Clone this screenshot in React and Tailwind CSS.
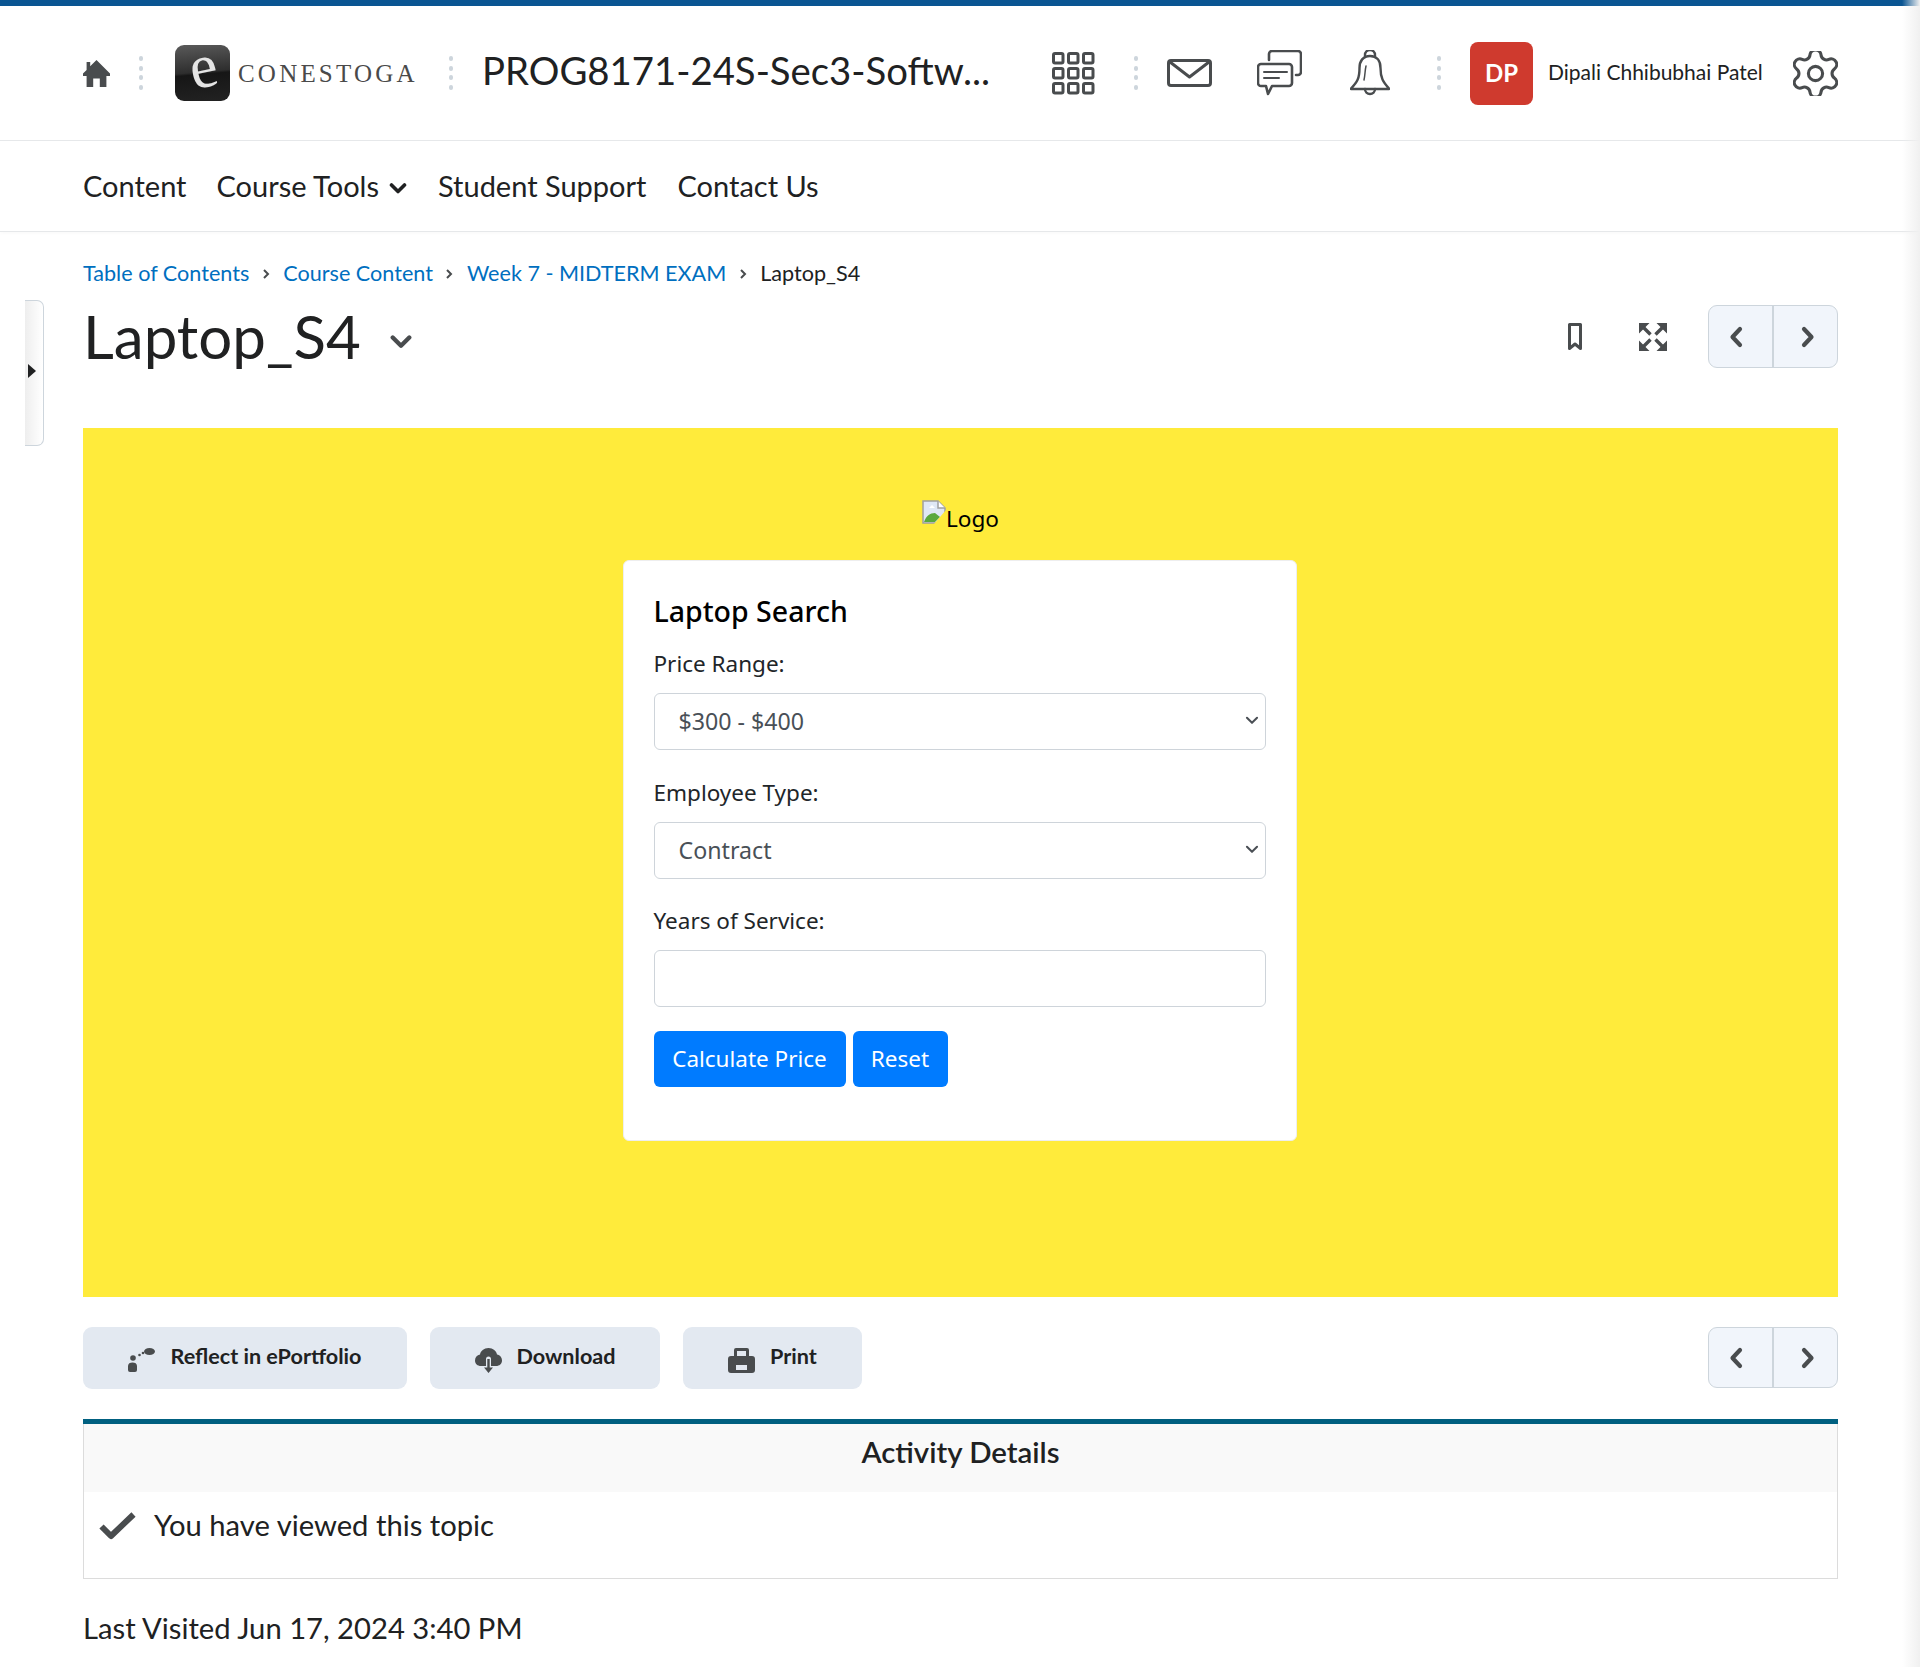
import React from "react";

const Sep = ({ className = "" }) => (
  <div className={`flex flex-col justify-between w-[4px] h-[34px] shrink-0 ${className}`}>
    {[0, 1, 2, 3].map((i) => (
      <span key={i} className="block w-[4px] h-[5px] rounded-full bg-[#cdd5dc]" />
    ))}
  </div>
);

const Chevron = ({ dir = "left" }) => (
  <svg width="14" height="22" viewBox="0 0 14 22" fill="none" stroke="#494c4e" strokeWidth="4.2" strokeLinecap="round" strokeLinejoin="round">
    {dir === "left" ? <path d="M11 3 3.5 11 11 19" /> : <path d="M3 3l7.5 8L3 19" />}
  </svg>
);

const Pager = ({ h }) => (
  <div className={`flex w-[130px] ${h} rounded-[9px] border border-[#cdd5dc] bg-[#f1f5fb] overflow-hidden shrink-0`}>
    <div className="w-[65px] flex items-center justify-center pr-[9px] border-r-2 border-[#cdd5dc]">
      <Chevron dir="left" />
    </div>
    <div className="flex-1 flex items-center justify-center pl-[4px]">
      <Chevron dir="right" />
    </div>
  </div>
);

const Home = () => (
  <svg className="shrink-0" width="27" height="27" viewBox="0 0 27 27" fill="#494c4e">
    <path d="M13.5 0 27 13.5v2.5h-3.6v11h-6.6v-8.5h-6.6V27H3.6V16H0v-2.5l3.6-3.6V2h3.6v4.3z" />
  </svg>
);

const GridIcon = () => (
  <svg className="shrink-0" width="43" height="43" viewBox="0 0 43 43" fill="none" stroke="#494c4e" strokeWidth="3">
    {[1.5, 16.5, 31.5].flatMap((y) =>
      [1.5, 16.5, 31.5].map((x) => <rect key={`${x}-${y}`} x={x} y={y} width="9.5" height="9.5" rx="1.5" />)
    )}
  </svg>
);

const Mail = () => (
  <svg className="shrink-0" width="45" height="28" viewBox="0 0 45 28" fill="none" stroke="#494c4e" strokeWidth="3" strokeLinejoin="round">
    <rect x="1.5" y="1.5" width="42" height="25" rx="2.5" />
    <path d="M3 3l19.5 15L42 3" />
  </svg>
);

const Chat = () => (
  <svg className="shrink-0" width="45" height="46" viewBox="0 0 45 46" fill="none" stroke="#494c4e" strokeWidth="2.6" strokeLinejoin="round" strokeLinecap="round">
    <path d="M12 10V4a3 3 0 0 1 3-3h26a3 3 0 0 1 3 3v18a3 3 0 0 1-3 3h-2" />
    <path d="M4 14h28a3 3 0 0 1 3 3v16a3 3 0 0 1-3 3H15l-4 8-2-8H4a3 3 0 0 1-3-3V17a3 3 0 0 1 3-3z" />
    <path d="M7 22h23M7 28h15" strokeWidth="2" />
  </svg>
);

const Bell = () => (
  <svg className="shrink-0" width="40" height="46" viewBox="0 0 40 46" fill="none" stroke="#494c4e" strokeWidth="2.4" strokeLinejoin="round" strokeLinecap="round">
    <path d="M15 7V5a5 5 0 0 1 10 0v2" />
    <path d="M20 6c-7 0-10.500 5-10.500 12 0 10-2 14-8.500 20.500V39h38v-.5C33 32 30.500 28 30.500 18 30.500 11 27 6 20 6z" />
    <path d="M15 39a5 5 0 0 0 10 0" />
    <path d="M16 16c-1 4-1 10-2 14" strokeWidth="1.500" />
  </svg>
);

const Gear = () => (
  <svg className="shrink-0" width="45" height="45" viewBox="2.8 2.5 18.4 19" fill="none" stroke="#494c4e" strokeWidth="1.3" strokeLinecap="round" strokeLinejoin="round">
    <path d="M9.671 4.136a2.34 2.34 0 0 1 4.659 0 2.34 2.34 0 0 0 3.319 1.915 2.34 2.34 0 0 1 2.33 4.033 2.34 2.34 0 0 0 0 3.831 2.34 2.34 0 0 1-2.33 4.033 2.34 2.34 0 0 0-3.319 1.915 2.34 2.34 0 0 1-4.659 0 2.34 2.34 0 0 0-3.32-1.915 2.34 2.34 0 0 1-2.33-4.033 2.34 2.34 0 0 0 0-3.831A2.34 2.34 0 0 1 6.35 6.051a2.34 2.34 0 0 0 3.319-1.915" />
    <circle cx="12" cy="12" r="3" />
  </svg>
);

const SmallChevronDown = ({ w = 18, h = 11, sw = 3.4, color = "#494c4e" }) => (
  <svg width={w} height={h} viewBox="0 0 18 11" fill="none" stroke={color} strokeWidth={sw} strokeLinecap="round" strokeLinejoin="round">
    <path d="M2.500 2 9 8.500 15.500 2" />
  </svg>
);

const Crumb = ({ children }) => <span className="text-[#006fbf]">{children}</span>;
const CrumbSep = () => (
  <svg className="mx-[13.5px] mt-[2px] shrink-0" width="7" height="10" viewBox="0 0 7 10" fill="none" stroke="#494c4e" strokeWidth="2">
    <path d="M1 1l4 4-4 4" />
  </svg>
);

const SelectField = ({ label, value, options, className }) => (
  <div className={className}>
    <label className="block text-[22.5px] leading-[36px] text-[#212529] mb-[11px]">{label}</label>
    <div className="relative">
      <select
        defaultValue={value}
        className="block w-full h-[57px] appearance-none rounded-[6px] border border-[#ced4da] bg-white pl-[24px] text-[23.2px] text-[#495057] outline-none"
      >
        {options.map((o) => (
          <option key={o}>{o}</option>
        ))}
      </select>
      <span className="absolute right-[7px] top-[23px] flex">
        <SmallChevronDown w={14} h={9} sw={2.6} color="#4a4f55" />
      </span>
    </div>
  </div>
);

const ActionButton = ({ icon, label, className }) => (
  <button className={`flex items-start justify-center gap-[15px] h-[62px] rounded-[9px] bg-[#e3e9f1] text-[21.6px] font-bold text-[#202122] ${className}`}>
    <span className="mt-[21px] flex">{icon}</span>
    <span className="block mt-[15px] leading-[28px]">{label}</span>
  </button>
);

export default function App() {
  return (
    <div className="relative min-h-[1667px] bg-white font-['Lato',sans-serif] text-[#202122] overflow-hidden">
      <div className="h-[6px] bg-[#0a5592]" />

      <header className="flex items-center h-[135px] border-b border-[#e6e8ea] pl-[83px]">
        <Home />
        <Sep className="ml-[29px]" />
        <div className="ml-[32px] w-[55px] h-[56px] rounded-[9px] bg-[linear-gradient(175deg,#5a5a5a_0%,#2e2e2e_48%,#161616_52%,#222222_100%)] flex items-center justify-center shrink-0">
          <span className="font-['Liberation_Serif',serif] text-[62px] leading-[50px] text-[#e4e4e4] -mt-[14px] -rotate-12">e</span>
        </div>
        <span className="ml-[8px] mt-[2px] w-[177px] shrink-0 font-['Liberation_Serif',serif] text-[25px] tracking-[3.2px] text-[#4a4a4a] whitespace-nowrap">CONESTOGA</span>
        <Sep className="ml-[34px]" />
        <div className="ml-[29px] w-[508px] shrink-0 text-[38.3px] whitespace-nowrap -mt-[4px]">PROG8171-24S-Sec3-Softw...</div>
        <div className="ml-[62px]"><GridIcon /></div>
        <Sep className="ml-[39px]" />
        <div className="ml-[29px]"><Mail /></div>
        <div className="ml-[45px]"><Chat /></div>
        <div className="ml-[48px]"><Bell /></div>
        <Sep className="ml-[47px]" />
        <div className="ml-[29px] w-[63px] h-[63px] rounded-[8px] bg-[#cf3a2e] flex items-center justify-center text-white text-[24px] font-bold shrink-0">DP</div>
        <div className="ml-[15px] w-[214px] shrink-0 text-[21px] whitespace-nowrap -mt-[2px]">Dipali Chhibubhai Patel</div>
        <div className="ml-[31px]"><Gear /></div>
      </header>

      <nav className="flex items-center h-[91px] border-b border-[#e6e8ea] pl-[83px] text-[29px] shadow-[0_2px_3px_rgba(0,0,0,0.02)]">
        <span>Content</span>
        <span className="ml-[30px]">Course Tools</span>
        <span className="ml-[10px] mt-[4px] flex"><SmallChevronDown w={18} h={11} sw={3.6} color="#202122" /></span>
        <span className="ml-[31px]">Student Support</span>
        <span className="ml-[31px]">Contact Us</span>
      </nav>

      <div className="absolute left-[25px] top-[300px] w-[19px] h-[146px] rounded-r-[7px] border border-l-0 border-[#cdd5dc] bg-gradient-to-r from-[#eeeeee] to-white flex items-center">
        <svg className="ml-[3px] -mt-[4px]" width="8" height="14" viewBox="0 0 8 14" fill="#202122"><path d="M0 0l8 7-8 7z" /></svg>
      </div>

      <main className="pl-[83px] pr-[82px]">
        <div className="flex items-center h-[30px] mt-[26px] text-[21.6px] whitespace-nowrap">
          <Crumb>Table of Contents</Crumb>
          <CrumbSep />
          <Crumb>Course Content</Crumb>
          <CrumbSep />
          <Crumb>Week 7 - MIDTERM EXAM</Crumb>
          <CrumbSep />
          <span>Laptop_S4</span>
        </div>

        <div className="flex items-center h-[63px] mt-[17px]">
          <h1 className="text-[60px] leading-[63px] font-normal whitespace-nowrap">Laptop_S4</h1>
          <span className="ml-[28px] mt-[10px] flex"><SmallChevronDown w={24} h={14} sw={3.4} /></span>
          <div className="ml-auto flex items-center">
            <svg width="14" height="28" viewBox="0 0 14 28" fill="none" stroke="#494c4e" strokeWidth="3">
              <path d="M1.500 1.500h11v24L7 21l-5.500 4.500z" strokeLinejoin="round" />
            </svg>
            <svg className="ml-[57px]" width="28" height="28" viewBox="0 0 28 28" fill="#494c4e" stroke="#494c4e" strokeWidth="3.400">
              <path d="M0 0h10.500L0 10.500zM28 0v10.500L17.500 0zM0 28V17.500L10.500 28zM28 28H17.500L28 17.500z" stroke="none" />
              <path d="M4 4l7.500 7.500M24 4l-7.500 7.500M4 24l7.500-7.500M24 24l-7.500-7.500" fill="none" />
            </svg>
            <div className="ml-[41px]"><Pager h="h-[63px]" /></div>
          </div>
        </div>

        <section className="mt-[60px] h-[869px] bg-[#ffeb3b] flex flex-col items-center">
          <div className="flex items-start mt-[72px] h-[60px] text-[22.6px] leading-[34px] text-black font-['Noto_Sans',sans-serif]">
            <svg width="24" height="24" viewBox="0 0 24 24" className="shrink-0">
              <path d="M1 1h15l7 7v15H1z" fill="#dfe7f5" stroke="#a0a0a0" strokeWidth="1.500" />
              <path d="M16 1v7h7" fill="#fff" stroke="#a0a0a0" strokeWidth="1.500" />
              <path d="M2 22c2-6 6-9 11-9l5 4-5 5z" fill="#5aa83c" />
              <path d="M7 8l3-3 3 3z" fill="#fff" />
              <path d="M24 10v14H12z" fill="#ffeb3b" />
            </svg>
            <span className="mt-[2px]">Logo</span>
          </div>

          <div className="w-[674px] h-[581px] mr-[2px] rounded-[6px] bg-white border border-[#eeeeee] px-[30px] pt-[30px] font-['Noto_Sans',sans-serif] text-[#212529]">
            <h2 className="text-[28.5px] leading-[40px] font-medium text-black">Laptop Search</h2>
            <SelectField className="mt-[15px]" label="Price Range:" value="$300 - $400" options={["$300 - $400"]} />
            <SelectField className="mt-[25px]" label="Employee Type:" value="Contract" options={["Contract"]} />
            <div className="mt-[24px]">
              <label className="block text-[22.5px] leading-[36px] mb-[11px]">Years of Service:</label>
              <input type="text" className="block w-full h-[57px] rounded-[6px] border border-[#ced4da] bg-white outline-none" />
            </div>
            <div className="flex gap-[7px] mt-[24px]">
              <button className="w-[192px] h-[56px] rounded-[6px] bg-[#007bff] text-white text-[22.5px]">Calculate Price</button>
              <button className="w-[95px] h-[56px] rounded-[6px] bg-[#007bff] text-white text-[22.5px]">Reset</button>
            </div>
          </div>
        </section>

        <div className="flex items-start mt-[30px]">
          <ActionButton
            className="w-[324px]"
            label="Reflect in ePortfolio"
            icon={
              <svg width="27" height="24" viewBox="0 0 27 24" fill="#494c4e">
                <ellipse cx="21.500" cy="3.500" rx="5.500" ry="3.500" />
                <circle cx="5" cy="10" r="2.800" />
                <path d="M0 18c0-2.500 2-3.500 4.500-3.500S9 15.500 9 18v4a2 2 0 0 1-2 2H2a2 2 0 0 1-2-2z" />
                <circle cx="11.500" cy="7" r="1.300" />
                <circle cx="15" cy="5" r="1.300" />
              </svg>
            }
          />
          <ActionButton
            className="w-[230px] ml-[23px]"
            label="Download"
            icon={
              <svg width="27" height="25" viewBox="0 0 27 25" fill="#494c4e">
                <path d="M13.500 0C9 0 5.500 3 5 6.500 2 7 0 9.500 0 12.500 0 15.800 2.500 18 6 18h5V11a2.500 2.500 0 0 1 5 0v7h5c3.500 0 6-2.200 6-5.500 0-3-2-5.500-5-6C21.500 3 18 0 13.500 0z" />
                <path d="M12.300 11h2.400v8.500H18L13.500 25 9 19.500h3.300z" />
              </svg>
            }
          />
          <ActionButton
            className="w-[179px] ml-[23px]"
            label="Print"
            icon={
              <svg width="27" height="25" viewBox="0 0 27 25" fill="#494c4e">
                <path d="M6 9V2a2 2 0 0 1 2-2h11a2 2 0 0 1 2 2v7h-3V3H9v6z" />
                <path fillRule="evenodd" d="M3 8h21a3 3 0 0 1 3 3v11a3 3 0 0 1-3 3H3a3 3 0 0 1-3-3V11a3 3 0 0 1 3-3zm5 9v5h11v-5z" />
              </svg>
            }
          />
          <div className="ml-auto"><Pager h="h-[61px]" /></div>
        </div>

        <div className="mt-[30px] border-t-[5px] border-[#006080]">
          <div className="h-[68px] bg-[#f9f9f9] border-x border-[#dcdcdc] flex items-center justify-center text-[29.4px] font-semibold pb-[12px]">
            Activity Details
          </div>
          <div className="h-[87px] border border-t-0 border-[#dcdcdc] flex items-start pt-[15px] pl-[15px]">
            <svg className="mt-[5px]" width="37" height="28" viewBox="0 0 37 28" fill="none" stroke="#494c4e" strokeWidth="6" strokeLinejoin="round">
              <path d="M2.500 14.500 12 24 34.500 2.500" />
            </svg>
            <span className="ml-[18px] text-[29.2px] leading-[36px]">You have viewed this topic</span>
          </div>
        </div>

        <div className="mt-[30px] text-[29.2px] leading-[38px]">Last Visited Jun 17, 2024 3:40 PM</div>
      </main>

      <div className="absolute right-0 top-0 bottom-0 w-[18px] bg-gradient-to-r from-transparent to-[#f0f0f0] pointer-events-none" />
    </div>
  );
}
